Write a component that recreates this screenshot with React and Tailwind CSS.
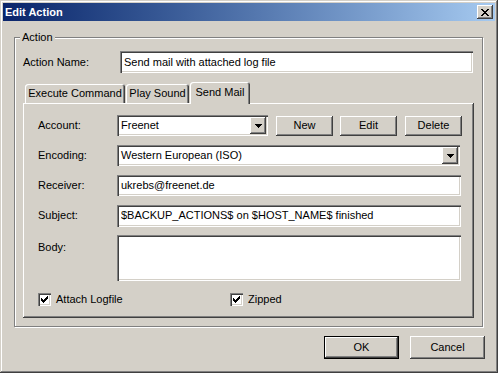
import React from "react";

const raised =
  "bg-[#d4d0c8] shadow-[inset_-1px_-1px_#404040,inset_1px_1px_#ffffff,inset_-2px_-2px_#808080]";
const sunken =
  "bg-white shadow-[inset_1px_1px_#808080,inset_2px_2px_#404040,inset_-1px_-1px_#ffffff,inset_-2px_-2px_#d4d0c8]";

function DropArrow() {
  return (
    <svg width="7" height="4" viewBox="0 0 7 4" shapeRendering="crispEdges">
      <path d="M0 0h7v1h-1v1h-1v1h-1v1h-1v-1h-1v-1h-1v-1h-1z" fill="#000" />
    </svg>
  );
}

function Combo({ value, width }) {
  return (
    <div className={`flex items-center h-[21px] p-[2px] ${sunken} ${width}`}>
      <span className="flex-1 pl-[2px] truncate">{value}</span>
      <div className={`w-[16px] h-[17px] flex items-center justify-center ${raised}`}>
        <DropArrow />
      </div>
    </div>
  );
}

function TextBox({ value, width, height = "h-[21px]" }) {
  return (
    <div className={`flex items-center px-[4px] ${sunken} ${width} ${height}`}>
      <span className="truncate">{value}</span>
    </div>
  );
}

function Check({ label, className = "" }) {
  return (
    <div className={`flex items-center ${className}`}>
      <div className={`w-[13px] h-[13px] flex items-center justify-center ${sunken}`}>
        <svg width="7" height="7" viewBox="0 0 7 7" shapeRendering="crispEdges">
          <path
            d="M6 0h1v1h-1z M5 1h2v1h-2z M0 2h1v1h-1z M4 2h3v1h-3z M0 3h2v1h-2z M3 3h3v1h-3z M0 4h5v1h-5z M1 5h3v1h-3z M2 6h1v1h-1z"
            fill="#000"
          />
        </svg>
      </div>
      <span className="ml-[5px]">{label}</span>
    </div>
  );
}

function Row({ label, children, className = "" }) {
  return (
    <div className={`flex items-center h-[21px] ${className}`}>
      <span className="w-[79px]">{label}</span>
      {children}
    </div>
  );
}

export default function App() {
  return (
    <div className="w-[498px] h-[373px] bg-[#d4d0c8] p-[3px] flex flex-col text-[11px] leading-[13px] text-black font-['Liberation_Sans',Arial,sans-serif] shadow-[inset_-1px_-1px_#404040,inset_1px_1px_#d4d0c8,inset_-2px_-2px_#808080,inset_2px_2px_#ffffff]">
      {/* title bar */}
      <div className="h-[18px] flex items-center justify-between bg-gradient-to-r from-[#0a246a] to-[#a6caf0] pl-[2px] pr-[2px]">
        <span className="font-bold text-white">Edit Action</span>
        <div className={`w-[16px] h-[14px] flex items-center justify-center ${raised}`}>
          <svg width="8" height="7" viewBox="0 0 8 7" shapeRendering="crispEdges">
            <path
              d="M0 0h2v1h-2z M6 0h2v1h-2z M1 1h2v1h-2z M5 1h2v1h-2z M2 2h4v1h-4z M3 3h2v1h-2z M2 4h4v1h-4z M1 5h2v1h-2z M5 5h2v1h-2z M0 6h2v1h-2z M6 6h2v1h-2z"
              fill="#000"
            />
          </svg>
        </div>
      </div>

      {/* Action group */}
      <div className="ml-[11px] mt-[16px] w-[469px] h-[290px] border border-[#808080] shadow-[inset_1px_1px_#ffffff,1px_1px_#ffffff]">
        <div className="-mt-[7px] ml-[5px] px-[2px] w-fit bg-[#d4d0c8]">Action</div>

        <div className="flex items-center ml-[8px] mt-[7px]">
          <span className="w-[97px]">Action Name:</span>
          <TextBox value="Send mail with attached log file" width="w-[353px]" height="h-[22px]" />
        </div>

        {/* tabs */}
        <div className="flex items-end ml-[8px] mt-[9px] h-[21px]">
          <div className={`ml-[2px] w-[100px] h-[19px] flex items-center justify-center rounded-t-[3px] bg-[#d4d0c8] shadow-[inset_1px_1px_#ffffff,inset_-1px_0_#404040,inset_-2px_0_#808080]`}>
            Execute Command
          </div>
          <div className="ml-[1px] w-[63px] h-[19px] flex items-center justify-center rounded-t-[3px] bg-[#d4d0c8] shadow-[inset_1px_1px_#ffffff,inset_-1px_0_#404040,inset_-2px_0_#808080]">
            Play Sound
          </div>
          <div className="relative z-10 ml-[1px] -mb-[1px] w-[60px] h-[22px] pb-[2px] flex items-center justify-center rounded-t-[3px] bg-[#d4d0c8] shadow-[inset_1px_1px_#ffffff,inset_-1px_0_#404040,inset_-2px_0_#808080]">
            Send Mail
          </div>
        </div>

        <div className="ml-[8px] w-[451px] h-[215px] pt-[12px] pl-[15px] shadow-[inset_-1px_-1px_#404040,inset_1px_1px_#ffffff,inset_-2px_-2px_#808080]">
          <Row label="Account:">
            <Combo value="Freenet" width="w-[151px]" />
            <button className={`ml-[8px] w-[57px] h-[20px] ${raised}`}>New</button>
            <button className={`ml-[7px] w-[57px] h-[20px] ${raised}`}>Edit</button>
            <button className={`ml-[8px] w-[57px] h-[20px] ${raised}`}>Delete</button>
          </Row>
          <Row label="Encoding:" className="mt-[9px]">
            <Combo value="Western European (ISO)" width="w-[343px]" />
          </Row>
          <Row label="Receiver:" className="mt-[9px]">
            <TextBox value="ukrebs@freenet.de" width="w-[344px]" />
          </Row>
          <Row label="Subject:" className="mt-[9px]">
            <TextBox value="$BACKUP_ACTIONS$ on $HOST_NAME$ finished" width="w-[344px]" height="h-[22px]" />
          </Row>
          <div className="flex items-start mt-[9px]">
            <span className="w-[79px] pt-[6px]">Body:</span>
            <div className={`w-[344px] h-[46px] ${sunken}`} />
          </div>
          <div className="flex items-center mt-[12px]">
            <Check label="Attach Logfile" className="w-[192px]" />
            <Check label="Zipped" />
          </div>
        </div>
      </div>

      {/* dialog buttons */}
      <div className="flex justify-end gap-[11px] mt-[9px] pr-[10px]">
        <button className={`w-[75px] h-[23px] border border-black ${raised}`}>OK</button>
        <button className={`w-[75px] h-[23px] ${raised}`}>Cancel</button>
      </div>
    </div>
  );
}
